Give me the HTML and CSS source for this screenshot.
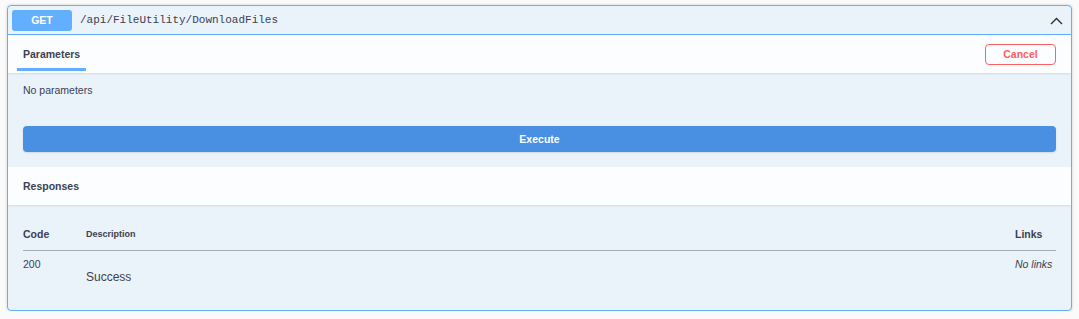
FILE: index.html
```html
<!DOCTYPE html>
<html lang="en">
<head>
    <meta charset="UTF-8">
    <title>/api/FileUtility/DownloadFiles</title>
    <link rel="stylesheet" href="styles.css">
</head>
<body>
    <div class="opblock">
        <!-- Naglowek operacji -->
        <div class="summary">
            <span class="method">GET</span>
            <span class="path">/api/FileUtility/DownloadFiles</span>
            <svg class="arrow" width="13" height="8" viewBox="0 0 13 8">
                <path d="M1 7 L6.5 1.5 L12 7" fill="none" stroke="#2b2f36" stroke-width="1.4"/>
            </svg>
        </div>

        <!-- Parametry -->
        <div class="section-header">
            <div class="tab">
                <span class="tab-label">Parameters</span>
                <span class="tab-bar"></span>
            </div>
            <button class="btn-cancel">Cancel</button>
        </div>
        <div class="params-body">
            <div class="no-params">No parameters</div>
            <button class="btn-execute">Execute</button>
        </div>

        <!-- Odpowiedzi -->
        <div class="section-header responses-header">
            <span class="title">Responses</span>
        </div>
        <div class="responses-body">
            <div class="resp-row resp-head">
                <span class="col-code">Code</span>
                <span class="col-desc">Description</span>
                <span class="col-links">Links</span>
            </div>
            <div class="resp-row">
                <span class="col-code">200</span>
                <span class="col-desc"><p class="success">Success</p></span>
                <span class="col-links no-links">No links</span>
            </div>
        </div>
    </div>
</body>
</html>
```

FILE: styles.css
```css
body {
    margin: 0;
    padding: 5px 7px 0;
    background: #fafafa;
    font-family: "Liberation Sans", Arial, sans-serif;
    color: #3b4151;
}
.opblock {
    border: 1px solid #61affe;
    border-radius: 4px;
    background: rgba(97, 175, 254, 0.1);
    box-shadow: 0 0 3px rgba(0, 0, 0, 0.19);
    overflow: hidden;
}
.summary {
    display: flex;
    align-items: center;
    height: 28px;
    padding: 0 4px;
    border-bottom: 1px solid #61affe;
}
.method {
    width: 60px;
    height: 21px;
    line-height: 21px;
    border-radius: 3px;
    background: #61affe;
    color: #fff;
    font-size: 10.5px;
    font-weight: bold;
    text-align: center;
}
.path {
    margin-left: 8px;
    font-family: "Liberation Mono", "DejaVu Sans Mono", monospace;
    font-size: 11px;
    color: #3b4151;
    flex: 1;
}
.arrow {
    margin-right: 4px;
    margin-top: 1px;
}
.section-header {
    display: flex;
    align-items: center;
    justify-content: space-between;
    height: 38px;
    padding: 0 15px 0 9px;
    background: rgba(255, 255, 255, 0.8);
    box-shadow: 0 1px 2px rgba(0, 0, 0, 0.1);
}
.tab {
    display: flex;
    flex-direction: column;
    align-self: flex-start;
    padding-top: 12px;
}
.tab-label {
    padding: 0 6px;
    line-height: 14px;
    font-size: 10.5px;
    font-weight: bold;
}
.tab-bar {
    height: 3px;
    margin-top: 7px;
    background: #61affe;
}
.btn-cancel {
    width: 71px;
    height: 21px;
    padding: 0;
    border: 1px solid #ff6060;
    border-radius: 4px;
    background: transparent;
    color: #ff6060;
    font-family: "Liberation Sans", Arial, sans-serif;
    font-size: 10.5px;
    font-weight: bold;
}
.params-body {
    padding: 10px 15px 15px 15px;
}
.no-params {
    line-height: 14px;
    font-size: 10.5px;
}
.btn-execute {
    display: block;
    width: 100%;
    height: 26px;
    margin-top: 29px;
    border: none;
    border-radius: 4px;
    background: #4990e2;
    color: #fff;
    font-family: "Liberation Sans", Arial, sans-serif;
    font-size: 10.5px;
    font-weight: bold;
    box-shadow: 0 1px 2px rgba(0, 0, 0, 0.1);
}
.responses-header {
    padding-left: 15px;
}
.title {
    font-size: 10.5px;
    font-weight: bold;
}
.responses-body {
    padding: 22px 15px 26px 15px;
}
.resp-row {
    display: grid;
    grid-template-columns: 63px 1fr 41px;
    line-height: 14px;
    font-size: 10.5px;
}
.resp-head {
    padding-bottom: 9px;
    border-bottom: 1px solid #a5adb6;
    font-weight: bold;
    align-items: center;
}
.resp-head .col-desc {
    font-size: 9px;
}
.resp-head + .resp-row {
    padding-top: 6px;
}
.success {
    margin: 13px 0 0;
    font-size: 12px;
    line-height: 14px;
}
.no-links {
    font-style: italic;
    white-space: nowrap;
}
```
